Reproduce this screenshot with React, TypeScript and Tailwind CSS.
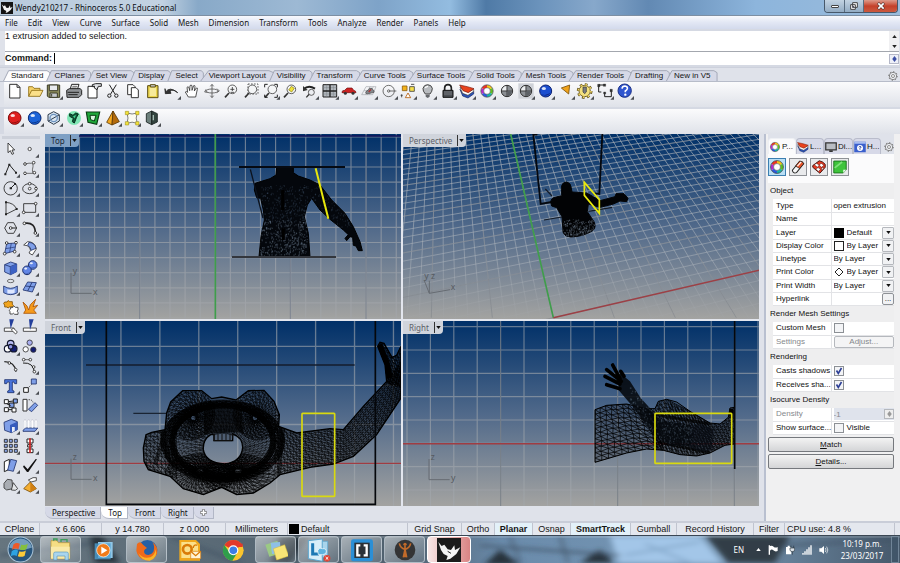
import React, { ReactNode } from "react";

type P = [number, number];

/* ---------- wireframe helpers ---------- */

function sample(pts: P[], n: number): P[] {
  const acc = [0];
  for (let i = 1; i < pts.length; i++) {
    acc.push(acc[i - 1] + Math.hypot(pts[i][0] - pts[i - 1][0], pts[i][1] - pts[i - 1][1]));
  }
  const total = acc[acc.length - 1];
  const out: P[] = [];
  let k = 1;
  for (let i = 0; i <= n; i++) {
    const d = (total * i) / n;
    while (k < pts.length - 1 && acc[k] < d) k++;
    const t = (d - acc[k - 1]) / (acc[k] - acc[k - 1] || 1);
    out.push([pts[k - 1][0] + (pts[k][0] - pts[k - 1][0]) * t, pts[k - 1][1] + (pts[k][1] - pts[k - 1][1]) * t]);
  }
  return out;
}

function patch(a: P[], b: P[], nu: number, nv: number): string {
  const A = sample(a, nu);
  const B = sample(b, nu);
  const at = (i: number, j: number) => {
    const t = j / nv;
    const wob = j > 0 && j < nv ? Math.sin(i * 2.3 + j * 1.7) * 1.6 : 0;
    return `${(A[i][0] + (B[i][0] - A[i][0]) * t + wob).toFixed(1)} ${(A[i][1] + (B[i][1] - A[i][1]) * t - wob).toFixed(1)}`;
  };
  let d = "";
  for (let j = 0; j <= nv; j++) {
    d += "M" + at(0, j);
    for (let i = 1; i <= nu; i++) d += "L" + at(i, j);
  }
  for (let i = 0; i <= nu; i++) {
    d += "M" + at(i, 0);
    for (let j = 1; j <= nv; j++) d += "L" + at(i, j);
  }
  for (let i = 0; i < nu; i++) for (let j = 0; j < nv; j++) d += `M${at(i, j)}L${at(i + 1, j + 1)}`;
  return d;
}

function ell(cx: number, cy: number, rx: number, ry: number): P[] {
  const out: P[] = [];
  for (let i = 0; i <= 60; i++) {
    const a = (i / 60) * Math.PI * 2;
    out.push([cx + rx * Math.cos(a), cy + ry * Math.sin(a)]);
  }
  return out;
}

function specks(x: number, y: number, w: number, h: number, n: number): string {
  let s = 7;
  const r = () => (s = (s * 16807) % 2147483647) / 2147483647;
  let d = "";
  for (let i = 0; i < n; i++) d += `M${(x + r() * w).toFixed(0)} ${(y + r() * h).toFixed(0)}v${(2 + r() * 4).toFixed(0)}`;
  return d;
}

function gridPath(x0: number, dx: number, nx: number, y0: number, dy: number, ny: number, l: number, r: number): string {
  let d = "";
  for (let i = 0; i < nx; i++) d += `M${x0 + dx * i} 0V580`;
  for (let i = 0; i < ny; i++) d += `M${l} ${y0 + dy * i}H${r}`;
  return d;
}

function Scene({ id, box, children }: { id: string; box: string; children: ReactNode }) {
  const [x, y] = box.split(" ");
  return (
    <svg viewBox={box} preserveAspectRatio="xMidYMid slice" className="absolute inset-0 h-full w-full">
      <defs>
        <linearGradient id={id} x1="0" y1="0" x2="0" y2="1">
          <stop offset="0" stopColor="#003068" />
          <stop offset="0.5" stopColor="#50698a" />
          <stop offset="1" stopColor="#a3a3a1" />
        </linearGradient>
      </defs>
      <rect x={x} y={y} width="1068" height="556" fill={`url(#${id})`} />
      {children}
    </svg>
  );
}

function Axis({ x, y, h, v }: { x: number; y: number; h: string; v: string }) {
  return (
    <g fontFamily="Noto Sans, sans-serif" fontSize="26" fill="#565a60">
      <path d={`M${x} ${y - 62}V${y}H${x + 62}`} fill="none" stroke="#666b72" strokeWidth="3" />
      <text x={x + 66} y={y + 5}>{h}</text>
      <text x={x + 5} y={y - 58}>{v}</text>
    </g>
  );
}

const TORSO =
  "M170 112H220V128L235 138L270 150L300 165L335 210L375 250L400 290L420 335L427 362L415 362L408 348L400 346L398 322L390 320L380 332L375 325L385 314L370 300L330 268L300 240L275 205L262 225L253 260L265 310L270 380H117L123 320L133 270L130 240L122 205L110 203L103 180L105 160L150 146L168 135Z";

function TopScene() {
  return (
    <Scene id="gTop" box="-525 12 1068 555">
      <path d={gridPath(-512, 45.25, 24, 20.5, 45.3, 13, -530, 545)} stroke="#a4a8ad" strokeOpacity=".62" strokeWidth="3.5" fill="none" />
      <path d="M-525 18H545" stroke="#11125a" strokeWidth="4" />
      <path d="M-241 12V567M211 12V567M438 12V567" stroke="#667080" strokeOpacity=".6" strokeWidth="3" />
      <path d="M-14 12V567" stroke="#3f9d4b" strokeWidth="5" />
      <clipPath id="torso"><path d={TORSO} /></clipPath>
      <path d={TORSO} fill="#04070c" stroke="#000" strokeWidth="3" />
      <g clipPath="url(#torso)" fill="none">
        <path d={specks(125, 165, 140, 110, 300)} stroke="#4a617a" strokeOpacity=".5" strokeWidth="1.6" />
        <path d={specks(122, 270, 141, 105, 420)} stroke="#7d90a5" strokeOpacity=".55" strokeWidth="1.8" />
        <path d={specks(270, 165, 130, 130, 220)} stroke="#4a617a" strokeOpacity=".45" strokeWidth="1.6" />
        <path d="M190 295v35M188 180v60" stroke="#000" strokeWidth="9" />
      </g>
      <path d="M57 111H375" stroke="#060a12" strokeWidth="6" />
      <path d="M36 381H348" stroke="#33363c" strokeWidth="6" />
      <path d="M91 118L129 264" stroke="#0c131e" strokeWidth="4" />
      <path d="M287 115L325 266" stroke="#e8e80c" strokeWidth="6" />
      <Axis x={-447} y={490} h="x" v="y" />
    </Scene>
  );
}

function perspectiveGrid(): { minor: string; major: string } {
  let minor = "";
  let major = "";
  for (let j = -16; j <= 44; j++) {
    const x = 460 + 36.6 * j;
    const y2 = -20;
    const t = (563 - y2) / 1450;
    const seg = `M${x.toFixed(1)} 563L${(x + (124 - x) * t).toFixed(1)} ${y2}`;
    const seg2 = `M${(x - (124 - x) * 0.01).toFixed(1)} 578L${x.toFixed(1)} 563`;
    minor += seg + seg2;
    if (j % 5 === 0) major += seg;
  }
  for (let k = -4; k <= 46; k++) {
    const t = k / (k + 44.3);
    const gx = 460 + (124 - 460) * t;
    const gy = 563 - 1450 * t;
    const m = (-887 - gy) / (6710 - gx);
    const seg = `M-10 ${(gy + m * (-10 - gx)).toFixed(1)}L1090 ${(gy + m * (1090 - gx)).toFixed(1)}`;
    minor += seg;
    if (k % 5 === 0) major += seg;
  }
  return { minor, major };
}

const BODY =
  "M485 192V168Q487 157 499 156Q512 158 513 170L516 186L548 188L562 190L600 212L645 200L648 191L672 191L684 205L680 215L660 213L640 222L600 232L565 222L562 245L582 275Q590 292 578 302Q550 320 512 321Q490 318 489 305L486 260L470 233L455 228Q448 210 460 203L485 197Z";

function PerspectiveScene() {
  const g = perspectiveGrid();
  return (
    <Scene id="gPer" box="9 12 1068 555">
      <linearGradient id="fade" x1="0" y1="0" x2="0" y2="567" gradientUnits="userSpaceOnUse">
        <stop offset="0" stopColor="#a9b0b8" stopOpacity=".75" />
        <stop offset=".7" stopColor="#a9b0b8" stopOpacity=".6" />
        <stop offset="1" stopColor="#a3a6aa" stopOpacity=".2" />
      </linearGradient>
      <path d={g.minor} stroke="url(#fade)" strokeWidth="2.8" fill="none" />
      <path d={g.major} stroke="#70767e" strokeOpacity=".5" strokeWidth="2.4" fill="none" />
      <path d="M332 12L460 563" stroke="#3f9d4b" strokeWidth="5" />
      <path d="M460 563L1080 420" stroke="#9c4046" strokeWidth="4.5" />
      <path d="M412 14H400L422 222L455 216M607 12L598 192L585 190" stroke="#05080e" strokeWidth="5.5" fill="none" />
      <path d="M436 177L456 198M432 270L486 261M565 244L637 232" stroke="#141b26" strokeWidth="3.5" fill="none" />
      <clipPath id="pbody"><path d={BODY} /></clipPath>
      <path d={BODY} fill="#020305" stroke="#020305" strokeWidth="3" />
      <path clipPath="url(#pbody)" d={specks(490, 268, 95, 50, 220)} stroke="#8091a4" strokeOpacity=".6" strokeWidth="1.8" />
      <path d="M553 157V196L598 250V209Z" stroke="#e8e80c" strokeWidth="5" fill="none" />
      <g fontFamily="Noto Sans, sans-serif" fontSize="26" fill="#565a60">
        <path d="M72 450L88 490L150 479M88 490V452" fill="none" stroke="#666b72" strokeWidth="3" />
        <text x="152" y="481">x</text>
        <text x="73" y="448">y</text>
        <text x="93" y="448">z</text>
      </g>
    </Scene>
  );
}

const FRONT =
  "M-230 390L-222 350L-205 343L-165 335L-160 285L-148 252L-112 218H-55L-25 242L5 237L48 246L85 218L132 217L162 250L178 290L176 325L230 345L330 332L370 335L430 265L500 190L495 140L473 85L480 73L492 76L516 118L530 112L543 85V240L470 350L400 415L340 438L270 448L180 470L150 495L100 525L50 530L5 508L-50 530L-110 512L-150 475L-215 455L-228 430Z";
const HOLE = "M-50 395Q-52 365 -28 350H-18V368H38V348Q68 358 68 388Q64 432 14 438Q-44 434 -50 395Z";

function FrontScene() {
  return (
    <Scene id="gFro" box="-525 9 1068 555">
      <path d={gridPath(-414, 116.8, 9, 85, 117.2, 4, -530, 545)} stroke="#a4a8ad" strokeOpacity=".6" strokeWidth="4" fill="none" />
      <path d="M-525 436H545" stroke="#a03c42" strokeWidth="4" />
      <path d="M-402 141H404" stroke="#141d2c" strokeWidth="5" />
      <path d="M-260 286H-160" stroke="#1a2433" strokeWidth="4" />
      <clipPath id="front"><path d={FRONT + HOLE} clipRule="evenodd" /></clipPath>
      <path d={FRONT + HOLE} fill="#0a1018" fillOpacity=".25" fillRule="evenodd" stroke="#000" strokeWidth="4" />
      <g clipPath="url(#front)" fill="none" stroke="#000">
        <g strokeWidth="1.8">
          <path d={patch([[165, 322], [230, 345], [330, 332], [370, 335], [430, 265], [500, 190], [545, 130]], [[165, 475], [270, 448], [340, 438], [400, 415], [470, 350], [515, 290], [548, 230]], 50, 16)} />
          <path d={patch([[473, 80], [495, 140], [500, 195]], [[560, 60], [552, 130], [550, 210]], 16, 12)} />
          <path d={patch(ell(-90, 290, 74, 76), ell(-80, 300, 8, 8), 42, 8)} />
          <path d={patch(ell(113, 290, 72, 76), ell(105, 300, 8, 8), 42, 8)} />
          <path d={patch(ell(-60, 470, 105, 62), ell(-60, 460, 12, 8), 50, 6)} />
          <path d={patch(ell(55, 470, 108, 62), ell(55, 460, 12, 8), 50, 6)} />
          <path d={patch([[-232, 340], [-232, 460]], [[-130, 325], [-130, 480]], 13, 9)} />
        </g>
        <path d={patch(ell(8, 370, 186, 122), ell(8, 368, 143, 98), 100, 7)} strokeWidth="2" />
        <path d={patch(ell(8, 368, 144, 98), ell(8, 392, 58, 46), 78, 7)} strokeWidth="1.3" />
        <ellipse cx="8" cy="370" rx="152" ry="108" strokeWidth="16" strokeOpacity=".85" />
        <ellipse cx="8" cy="372" rx="174" ry="118" strokeWidth="20" strokeOpacity=".45" />
        <path d="M-48 278Q10 262 66 278L70 345Q50 340 8 345Q-30 345 -48 350Z" fill="#000" fillOpacity=".7" stroke="none" />
        <path d="M-165 340L-195 440M-180 330L-150 440M190 330L175 470" strokeWidth="12" strokeOpacity=".5" />
        <path d="M478 80L500 135L510 180" strokeWidth="18" />
      </g>
      <path d="M-18 348V368M-6 348V368M6 348V368M18 348V368M30 348V368M38 348V362M-20 368H36" stroke="#111" strokeWidth="3" fill="none" />
      <path d="M-341 9V559H466V9" stroke="#05070b" strokeWidth="5" fill="none" />
      <rect x="246" y="286" width="98" height="249" rx="2" fill="none" stroke="#d9d90f" strokeWidth="5" />
      <Axis x={-447} y={484} h="x" v="z" />
    </Scene>
  );
}

const SIDE =
  "M585 275L620 262L680 258L740 272L765 272L775 250L800 244L830 252L870 280L930 315L960 318L985 298L990 270L1003 268V378L975 382L930 405L890 414L840 410L790 397L740 393L680 405L585 433Z";
const ARM = "M660 165L690 190L722 240L768 290L800 310L870 320L882 345L870 385L810 382L755 345L700 268L655 215Z";

function RightScene() {
  return (
    <Scene id="gRig" box="9 9 1068 555">
      <path d={gridPath(21, 70.2, 16, 26, 70, 8, 0, 1090)} stroke="#a4a8ad" strokeOpacity=".6" strokeWidth="3.5" fill="none" />
      <path d="M302 12V567M653 12V567M1003 12V567" stroke="#59616c" strokeOpacity=".5" strokeWidth="3" />
      <path d="M0 377H1090" stroke="#a03c42" strokeWidth="4.5" />
      <clipPath id="side"><path d={SIDE} /></clipPath>
      <path d={SIDE} fill="#0a1018" fillOpacity=".25" stroke="#000" strokeWidth="3" />
      <g clipPath="url(#side)" fill="none" stroke="#000">
        <path strokeWidth="2.2" d={patch([[585, 275], [620, 262], [680, 258], [750, 272]], [[585, 433], [680, 405], [740, 393], [790, 397]], 10, 11)} />
        <path strokeWidth="1.7" d={patch([[740, 272], [775, 250], [800, 244], [870, 280], [930, 315], [1003, 270]], [[770, 394], [840, 410], [890, 414], [930, 405], [975, 382], [1003, 378]], 42, 14)} />
        <path d="M765 290L930 318M775 372L930 405" strokeWidth="9" strokeOpacity=".7" />
      </g>
      <path d={ARM} fill="#05080c" fillOpacity=".88" />
      <path d="M660 182L638 141M664 190L620 155M660 198L615 175M660 212L620 200M672 175L662 160" stroke="#000" strokeWidth="11" strokeLinecap="round" />
      <path d={patch([[870, 322], [905, 320], [940, 335]], [[870, 388], [905, 400], [935, 395]], 12, 12)} fill="none" stroke="#0a0e14" strokeWidth="1.6" />
      <clipPath id="arm"><path d={ARM} /></clipPath>
      <path clipPath="url(#arm)" d={specks(690, 200, 190, 190, 520)} stroke="#65788e" strokeOpacity=".6" strokeWidth="1.6" />
      <path d="M1004 9V453" stroke="#05070b" strokeWidth="5" />
      <path d="M994 272V300" stroke="#000" strokeWidth="12" />
      <rect x="765" y="286" width="230" height="150" rx="2" fill="none" stroke="#d9d90f" strokeWidth="5" />
      <Axis x={87} y={485} h="y" v="z" />
    </Scene>
  );
}

function Viewport({ name, active, children }: { name: string; active?: boolean; children: ReactNode }) {
  return (
    <section className="relative min-h-0 min-w-0 overflow-hidden">
      {children}
      <button
        className={`absolute left-0 top-0 flex h-[13px] items-center rounded-br-sm pl-1.5 pr-0.5 text-[8px] leading-none ${
          active ? "bg-[#7fa0c4] text-[#1b2733]" : "bg-[#d0d4dc] text-[#5c6067]"
        }`}
      >
        {name}
        <span className="ml-[5px] h-[11px] border-l border-[#333]" />
        <svg viewBox="0 0 6 4" className="ml-px h-[3px] w-[5px]"><path d="M0 0h6L3 4z" fill="#111" /></svg>
      </button>
    </section>
  );
}

/* ---------- icons, each drawn on a 54 unit square ---------- */

const K = { stroke: "#222", strokeWidth: 3, fill: "none" };
const G = { stroke: "#555", strokeWidth: 2.5, fill: "none" };

function Ic({ children, tri }: { children: ReactNode; tri?: boolean }) {
  return (
    <svg viewBox="0 0 54 54" className="h-[18px] w-[18px] shrink-0">
      {children}
      {tri && <path d="M54 42v11H43z" fill="#4a4d52" />}
    </svg>
  );
}

function Tool({ label, tri, children }: { label: string; tri?: boolean; children: ReactNode }) {
  return (
    <button aria-label={label} className="flex h-[18px] w-[18px] items-center justify-center">
      <Ic tri={tri}>{children}</Ic>
    </button>
  );
}

const sphere = (cx: number, cy: number, r: number, fill: string, dark: string) => (
  <>
    <circle cx={cx} cy={cy} r={r} fill={fill} stroke={dark} strokeWidth="3" />
    <path d={`M${cx - r * 0.7} ${cy + r * 0.5}A${r} ${r} 0 0 0 ${cx + r * 0.8} ${cy + r * 0.3}Q${cx} ${cy + r * 0.9} ${cx - r * 0.7} ${cy + r * 0.5}`} fill={dark} />
    <ellipse cx={cx - r * 0.3} cy={cy - r * 0.4} rx={r * 0.35} ry={r * 0.25} fill="#fff" fillOpacity=".85" />
  </>
);

const wheel = (
  <g fill="none" strokeWidth="8">
    <path d="M27 13A14 14 0 0 1 39 20" stroke="#f5c518" />
    <path d="M39 20A14 14 0 0 1 39 34" stroke="#5dc21e" />
    <path d="M39 34A14 14 0 0 1 27 41" stroke="#19b5a5" />
    <path d="M27 41A14 14 0 0 1 15 34" stroke="#2a5be0" />
    <path d="M15 34A14 14 0 0 1 15 20" stroke="#b52ad0" />
    <path d="M15 20A14 14 0 0 1 27 13" stroke="#ee3322" />
    <circle cx="27" cy="27" r="18.5" stroke="#333" strokeWidth="2" />
    <circle cx="27" cy="27" r="10" stroke="#333" strokeWidth="1.5" fill="#fff" />
  </g>
);

const layers = (
  <g strokeWidth="2">
    <path d="M6 22L14 42L30 48L47 36V28L30 38L14 34Z" fill="#2b52b8" stroke="#13265e" />
    <path d="M6 16L14 34L30 40L47 28V22L30 30Z" fill="#fff" stroke="#444" />
    <path d="M5 9L15 26L31 32L48 20L28 14Z" fill="#e8421d" stroke="#7a1607" />
  </g>
);

const globe = (
  <g>
    <circle cx="27" cy="27" r="17" fill="#8b8f94" stroke="#333" strokeWidth="3" />
    <path d="M13 21Q17 12 26 12V26H12Z" fill="#eceef0" />
    <path d="M10 27H44M27 10V44" stroke="#333" strokeWidth="2.5" fill="none" />
    <path d="M28 28H42Q40 40 28 43Z" fill="#5d6166" />
  </g>
);

const lens = (extra?: ReactNode) => (
  <g>
    <path d="M21 33L9 46" stroke="#333" strokeWidth="5" />
    <circle cx="31" cy="22" r="13" fill="#f5f6f8" fillOpacity=".8" stroke="#444" strokeWidth="2.5" />
    {extra}
  </g>
);

const std: [string, boolean, ReactNode][] = [
  ["New", false, <path d="M11 7H33L42 16V48H11ZM33 7V16H42" stroke="#333" strokeWidth="3" fill="#fff" />],
  ["Open", false, <g stroke="#8a6a10" strokeWidth="2.5"><path d="M8 43V14H20L24 19H42V25" fill="#f6d36b" /><path d="M8 43L17 25H51L42 43Z" fill="#fbe08a" /></g>],
  ["Save", true, <g stroke="#3c3c28" strokeWidth="3"><path d="M7 9H44V46H11L7 42Z" fill="#8d8d5c" /><path d="M13 9H38V26H13Z" fill="#e9ebee" /><path d="M15 33H37V46H15Z" fill="#c5c8cc" /><path d="M20 36V44" /></g>],
  ["Print", false, <g stroke="#222" strokeWidth="3"><path d="M15 23L20 7H42L37 23" fill="#fff" /><path d="M5 25L13 20H46L50 25V38L42 46H6Z" fill="#8f9296" /><path d="M8 31H42M10 38H38" stroke="#222" /><path d="M22 13H37M20 18H35" strokeWidth="2" /></g>],
  ["Properties", false, <g><path d="M9 13H36V48H9Z" {...K} fill="#fff" /><path d="M22 8L32 5H49V13H40L36 23L28 18V12L22 14Z" fill="#e2e4e8" stroke="#222" strokeWidth="3" /></g>],
  ["Cut", false, <g><path d="M16 8L33 36M37 8L20 36" {...K} /><circle cx="16" cy="41" r="5" {...K} /><circle cx="37" cy="41" r="5" {...K} /></g>],
  ["Copy", false, <g stroke="#333" strokeWidth="3" fill="#fff"><path d="M11 8H27L33 14V38H11Z" /><path d="M22 17H36L43 24V47H22Z" /></g>],
  ["Paste", false, <g stroke="#5b4b10" strokeWidth="3"><path d="M11 11H42V47H11Z" fill="#ead44b" /><path d="M17 16H36V42H17Z" fill="#f7ea9a" stroke="none" /><path d="M19 8H34V15H19Z" fill="#c8cbd0" /></g>],
  ["Undo", true, <path d="M8 30Q20 12 44 32Q30 20 21 27L24 34L7 35L6 20Z" fill="#333" stroke="#222" strokeWidth="2.5" />],
  ["Pan", false, <path d="M16 45L7 30Q9 26 14 31L12 16Q15 12 18 17L20 26L21 11Q24 7 27 11V25L32 11Q36 9 36 14L34 27L40 18Q45 17 43 22L38 45Z" fill="#fff" stroke="#333" strokeWidth="2.5" />],
  ["Rotate", false, <g {...G}><path d="M27 8V46M22 13L27 7L32 13M22 41L27 47L32 41" /><ellipse cx="27" cy="27" rx="18" ry="6" /><path d="M9 22L5 30L14 31M42 20L49 27L41 32" /></g>],
  ["Zoom dynamic", false, lens(<path d="M25 22H37M31 15V27M26 31H36" stroke="#333" strokeWidth="2.5" />)],
  ["Zoom window", false, <g><path d="M18 6H48V36H18Z" stroke="#444" strokeWidth="2.5" strokeDasharray="5 4" fill="none" />{lens()}</g>],
  ["Zoom extents", true, <g>{lens()}<path d="M8 16V7H17M37 7H46V16M46 38V46H37M17 46H8V38" {...K} /></g>],
  ["Zoom selected", false, lens(<path d="M23 24L31 13L40 19L32 30Z" fill="#f0e23a" stroke="#8a7d10" strokeWidth="2" />)],
  ["Undo view", true, <g><path d="M8 22Q22 8 42 20" {...K} strokeWidth={6} /><path d="M6 12V28L20 24Z" fill="#333" /><path d="M25 36L16 46" stroke="#333" strokeWidth="4" /><circle cx="31" cy="31" r="9" fill="#eceef2" stroke="#444" strokeWidth="2.5" /></g>],
  ["Four view", true, <g><path d="M6 8H47V45H6Z" fill="#b3b8be" stroke="#222" strokeWidth="3" /><path d="M17 8V45M37 8V45M6 17H47M6 36H47" stroke="#7b8087" strokeWidth="1.5" /><path d="M27 8V45M6 27H47" stroke="#222" strokeWidth="4" /></g>],
  ["Set view", true, <g><path d="M6 30Q6 25 14 25L21 18H36L41 25Q48 26 48 32H6Z" fill="#cc2222" stroke="#6d0c0c" strokeWidth="2" /><circle cx="16" cy="34" r="4.5" fill="#333" /><circle cx="39" cy="34" r="4.5" fill="#333" /></g>],
  ["Set cplane", true, <g><path d="M5 38L18 14H48L38 38ZM12 26H44M16 38L30 14M28 38L40 14" stroke="#a5a8ac" strokeWidth="2" fill="none" /><path d="M17 32Q18 26 24 25L29 19H36L40 25Q43 27 42 31L20 36Z" fill="#84888d" stroke="#444" strokeWidth="2" /><path d="M26 30L33 22" stroke="#a33" strokeWidth="4" /></g>],
  ["Object snap", true, <g><circle cx="26" cy="27" r="17" {...G} /><path d="M26 27H49" {...G} /><circle cx="26" cy="27" r="3.5" {...K} fill="#fff" strokeWidth={2} /></g>],
  ["Select", true, <g strokeWidth="2.5"><path d="M10 12H24V26H10Z" fill="#f2b21b" stroke="#93600c" /><path d="M32 14H46V28H32Z" fill="#f7e04b" stroke="#444" /><path d="M27 33L35 47H19Z" fill="#fff" stroke="#b55d0a" /><path d="M5 40H11M8 37V46M36 7H46" stroke="#333" /></g>],
  ["Hide", true, <g><path d="M19 36Q11 27 12 19Q15 8 26 8Q38 9 40 19Q40 28 33 36Z" fill="#b9bcc0" stroke="#444" strokeWidth="3" /><path d="M20 38H32V44L26 48L20 44Z" fill="#66696d" /><path d="M19 18Q21 13 27 14" stroke="#fff" strokeWidth="4" fill="none" /></g>],
  ["Lock", true, <g><path d="M17 26V17Q18 8 27 8Q36 8 37 17V26" stroke="#222" strokeWidth="5" fill="none" /><path d="M12 25H42V46H12Z" fill="#4a4d52" stroke="#111" strokeWidth="3" /><path d="M15 30H39M15 36H39" stroke="#8d9095" strokeWidth="2" /></g>],
  ["Layer", true, layers],
  ["Object properties", true, wheel],
  ["Shade", false, globe],
  ["Shade selected", true, <g><path d="M4 4H50V50H4Z" fill="#cfd2d8" />{globe}</g>],
  ["Render", true, sphere(26, 27, 18, "#1c4fd0", "#0a1f70")],
  ["Lights", true, <path d="M13 18L38 9L35 36Z" fill="#f0a31c" stroke="#7b500b" strokeWidth="2.5" />],
  ["Options", true, <g><circle cx="26" cy="27" r="20" fill="none" stroke="#5d4a10" strokeWidth="7" strokeDasharray="8 7.7" /><circle cx="26" cy="27" r="17" fill="#f3e07e" stroke="#5d4a10" strokeWidth="2.5" /><circle cx="26" cy="27" r="19" fill="none" stroke="#ecd467" strokeWidth="5" strokeDasharray="5 9.9" /><path d="M21 15H31V30L26 35L21 30Z" fill="#7a7d82" stroke="#333" strokeWidth="2" /></g>],
  ["Dimension", true, <g {...K}><path d="M8 9V30M8 9H26M8 30H16M26 33V44H46V26" /><path d="M5 7H12V14H5ZM22 6H29V13H22ZM23 30H29V36H23ZM42 22H49V29H42Z" fill="#333" strokeWidth="1" /></g>],
  ["Help", true, <g><circle cx="26" cy="26" r="20" fill="#2f55cf" stroke="#1a2f86" strokeWidth="3" /><path d="M18 20Q19 12 27 12Q35 13 34 20Q33 24 28 27V31" stroke="#fff" strokeWidth="5" fill="none" /><circle cx="28" cy="38" r="3.5" fill="#fff" /></g>],
];

const extra: [string, ReactNode][] = [
  ["Red sphere", sphere(26, 27, 19, "#df1f1f", "#7c0a0a")],
  ["Blue sphere", sphere(26, 27, 19, "#1b63d8", "#0a2a74")],
  ["Slice", <g><path d="M26 8L43 17V36L26 46L9 36V17Z" fill="#dbe7f3" stroke="#2c3b4c" strokeWidth="3" /><path d="M10 36L42 18" stroke="#2c3b4c" strokeWidth="3" /><circle cx="26" cy="27" r="11" fill="none" stroke="#6d93bf" strokeWidth="4" /></g>],
  ["Morph", <g><circle cx="27" cy="27" r="21" fill="#35e08a" fillOpacity=".6" /><path d="M14 14L24 19L32 12L40 15L34 26L28 42L22 38L25 28L14 22Z" fill="#0f5b3a" stroke="#062c1b" strokeWidth="3" /><path d="M24 22L33 18L29 28Z" fill="#46d48f" /></g>],
  ["Cage", <g><path d="M7 9H47L38 46L12 40Z" fill="#1fa83a" stroke="#0a3d14" strokeWidth="3.5" /><path d="M18 19H36L31 36L20 32Z" fill="#d9f5de" stroke="#0a3d14" strokeWidth="3" /></g>],
  ["Pyramid", <g stroke="#5c3906" strokeWidth="2.5"><path d="M27 6L8 40L24 48Z" fill="#f4a81e" /><path d="M27 6L24 48L46 38Z" fill="#b36a0c" /></g>],
  ["Edit points", <g><path d="M12 12Q27 18 43 12Q36 27 43 43Q27 36 12 43Q18 27 12 12Z" fill="#fbfbf2" stroke="#666" strokeWidth="2.5" /><path d="M7 7H17V17H7ZM38 7H48V17H38ZM38 38H48V48H38ZM7 38H17V48H7Z" fill="#f3e23c" stroke="#8d8210" strokeWidth="1.5" /></g>],
  ["Box", <g stroke="#18211f" strokeWidth="2.5"><path d="M10 14L26 6V47L10 39Z" fill="#6c7f7b" /><path d="M26 6L43 14V39L26 47Z" fill="#33443f" /><path d="M31 18V34" stroke="#a4bbb3" strokeWidth="4" /></g>],
];

const dot = (x: number, y: number) => <circle cx={x} cy={y} r="4" fill="#fff" stroke="#222" strokeWidth="2.5" />;
const bl = { fill: "#7f9fe8", stroke: "#20336e", strokeWidth: 2.5 };

const side: [string, boolean, ReactNode][] = [
  ["Pointer", false, <path d="M18 9V38L25 32L30 43L35 41L30 30H38Z" {...K} fill="#fff" strokeWidth={2.5} />],
  ["Point", true, <circle cx="26" cy="27" r="5" fill="#fff" stroke="#333" strokeWidth="2.5" />],
  ["Polyline", true, <g><path d="M10 43L22 14L42 38" {...K} /><path d="M7 40H13V46H7ZM19 11H25V17H19ZM39 35H45V41H39Z" fill="#222" /></g>],
  ["Curve", true, <g><path d="M12 12Q40 4 36 20Q30 42 44 40H10" {...G} />{dot(12, 12)}{dot(38, 8)}{dot(12, 40)}{dot(40, 38)}</g>],
  ["Circle", true, <g><circle cx="26" cy="28" r="20" {...K} strokeWidth={2.5} /><path d="M26 28L39 15" {...K} /><path d="M23 25H30V31H23ZM36 12H42V18H36Z" fill="#222" /></g>],
  ["Ellipse", true, <g><ellipse cx="26" cy="29" rx="21" ry="15" {...K} strokeWidth={2.5} />{dot(26, 14)}{dot(26, 29)}{dot(45, 29)}</g>],
  ["Arc", true, <g><path d="M12 46V10Q36 12 44 30Z" {...K} strokeWidth={2.5} /><path d="M9 7H15V13H9ZM9 43H15V49H9ZM41 27H47V33H41Z" fill="#222" /></g>],
  ["Rectangle", true, <g><path d="M8 14H44V40H8Z" {...K} strokeWidth={2.5} />{dot(8, 40)}{dot(44, 14)}</g>],
  ["Polygon", true, <g><path d="M8 27L17 11H35L44 27L35 43H17Z" {...K} strokeWidth={2.5} /><path d="M26 27H44" {...K} />{dot(26, 27)}</g>],
  ["Fillet", true, <g><path d="M10 13Q44 8 43 44" stroke="#222" strokeWidth="5" fill="none" />{dot(10, 13)}{dot(43, 42)}</g>],
  ["Surface", true, <g><path d="M14 14L42 12L38 36L8 44Z" {...bl} /><path d="M28 12L23 40M11 29L40 24" stroke="#20336e" strokeWidth="2" />{dot(14, 12)}{dot(42, 11)}{dot(8, 44)}{dot(38, 38)}</g>],
  ["Sweep", true, <g><path d="M8 18L20 8Q42 8 46 30L34 48L24 42Q32 34 26 26Q20 18 8 18Z" fill="#fff" stroke="#333" strokeWidth="2.5" /><path d="M24 10Q42 12 45 28L30 34Q30 24 20 19Z" {...bl} /></g>],
  ["Box", true, <g><path d="M8 17L26 9L44 15V38L26 47L8 39Z" {...bl} /><path d="M8 17L25 23L44 15M25 23V46" stroke="#20336e" strokeWidth="2.5" fill="none" /><path d="M25 23L44 15V38L26 47Z" fill="#3d62c4" /></g>],
  ["Spheres", true, <g>{sphere(35, 18, 13, "#6286e6", "#20336e")}{sphere(18, 34, 13, "#6286e6", "#20336e")}</g>],
  ["Cylinder", true, <g><ellipse cx="26" cy="9" rx="10" ry="5" {...G} /><path d="M5 24Q26 38 46 24V44Q26 56 5 44Z" {...bl} /><path d="M16 34Q27 38 38 32V44Q27 48 16 46Z" fill="#dfe8ff" /></g>],
  ["Mesh", true, <g><path d="M6 36L20 12L46 14L34 42Z" {...bl} /><path d="M33 13L20 39M13 24L41 27" stroke="#20336e" strokeWidth="2.5" /></g>],
  ["Join", false, <g strokeWidth="2.5"><path d="M8 12H15Q18 4 23 11H31V19Q38 22 31 27H22Q18 33 15 27H8V21Q2 17 8 12Z" fill="#f2a51e" stroke="#7b500b" /><path d="M26 28H33Q36 21 40 28H48V36Q42 39 48 43V49H38Q34 43 31 48H24V41Q18 37 26 33Z" fill="#fff" stroke="#333" /></g>],
  ["Explode", false, <path d="M6 12L18 24L23 36L28 20L44 4L36 26L50 22L38 36L46 46H8L14 36Z" fill="#f59a1b" stroke="#a9540a" strokeWidth="2.5" />],
  ["Trim", false, <g><path d="M7 30H36V40H7Z" fill="#fff" stroke="#333" strokeWidth="2.5" /><path d="M22 4H36L26 32Z" fill="#233f9c" /><path d="M34 30L46 42L41 48L28 36Z" fill="#fff" stroke="#333" strokeWidth="2.5" /></g>],
  ["Split", false, <g><path d="M7 30H46V40H7Z" fill="#fff" stroke="#333" strokeWidth="2.5" /><path d="M24 4H38L27 36Z" fill="#233f9c" /></g>],
  ["Group", true, <g strokeWidth="3.5" stroke="#14192e"><circle cx="26" cy="17" r="10" fill="#b8bcf3" /><circle cx="17" cy="32" r="10" fill="#fff" /><circle cx="35" cy="32" r="10" fill="#141d72" /><circle cx="26" cy="26" r="7" fill="#8f96e6" /></g>],
  ["Ungroup", false, <g strokeWidth="2.5" stroke="#333"><circle cx="26" cy="14" r="8" fill="#a9aef0" /><circle cx="14" cy="34" r="8" fill="#fff" /><circle cx="37" cy="35" r="8" fill="#141d72" /></g>],
  ["Curve edit", false, <g><path d="M7 14Q38 14 42 44" {...K} strokeWidth={4} />{dot(22, 18)}{dot(41, 38)}</g>],
  ["Points on", true, <g><path d="M6 18Q38 16 40 46" {...K} /><path d="M6 8H30" {...G} />{dot(8, 8)}{dot(28, 8)}{dot(38, 30)}{dot(40, 44)}</g>],
  ["Text", true, <path d="M8 8H44V20H38L36 15H31V40L36 42V47H17V42L22 40V15H16L14 20H8Z" {...bl} fill="#4a74da" />],
  ["Move", true, <g><path d="M12 42L40 14" {...G} strokeDasharray="5 3" /><path d="M31 6H46V21H31Z" {...bl} /><path d="M8 32H22V46H8Z" {...K} fill="#fff" /></g>],
  ["Copy", false, <g stroke="#222" strokeWidth="3"><path d="M7 8H19V20H7ZM7 32H19V44H7ZM30 33H42V45H30Z" fill="#fff" /><path d="M34 6H46V18H34ZM22 18H36V31H22Z" fill="#7f9fe8" /><path d="M19 14L34 12M19 38H30M14 20L26 26" fill="none" /></g>],
  ["Rotate", false, <g stroke="#333" strokeWidth="3"><path d="M6 7H18V42H6Z" fill="#fff" /><path d="M22 37L42 17L50 25L32 44Z" {...bl} /><path d="M23 8Q34 8 36 16" fill="none" strokeDasharray="4 3" /></g>],
  ["Solid", true, <g><path d="M6 16L28 7L46 14V38L28 47L8 40Z" {...bl} /><path d="M24 24L46 14V38L38 42V30H30V46L24 44Z" fill="#365bbd" /><path d="M30 30H38V42L30 46Z" fill="#e8edf8" /></g>],
  ["Extrude", true, <g><path d="M6 40L14 33H50L42 43H6Z" {...bl} /><path d="M12 32V10M23 32V10M34 32V10M45 32V10" stroke="#fff" strokeWidth="3.5" /><path d="M8 14L12 6L16 14M19 14L23 6L27 14M30 14L34 6L38 14M41 14L45 6L49 14" fill="#fff" stroke="#aab" strokeWidth="1" /></g>],
  ["Array", true, <path d="M7 7H16V16H7ZM22 7H31V16H22ZM37 7H46V16H37ZM7 22H16V31H7ZM22 22H31V31H22ZM37 22H46V31H37ZM7 37H16V46H7ZM22 37H31V46H22ZM37 37H46V46H37Z" fill="#8ba6e6" stroke="#222" strokeWidth="2.5" />],
  ["Align", true, <g><path d="M18 6H36V18H18ZM20 23H33V30H20ZM18 36H36V47H18Z" fill="#fff" stroke="#222" strokeWidth="3" /><path d="M27 4V48" stroke="#cc2222" strokeWidth="5" /></g>],
  ["Shear", true, <g><path d="M7 17L22 10V40L7 47Z" {...K} fill="#fff" /><path d="M26 10L44 14L34 46L17 42Z" {...bl} /></g>],
  ["Check", true, <path d="M9 28L20 40L44 9L48 10L22 48H18L6 32Z" fill="#111" />],
  ["Solids", true, <g stroke="#333" strokeWidth="2.5"><path d="M6 22L16 10L30 12L32 38L14 42L6 36Z" fill="#a9adb3" /><path d="M34 20L47 38Q42 46 28 42Z" fill="#e5e7ea" /></g>],
  ["Analyze", true, <g strokeWidth="2.5"><path d="M8 38L28 18L46 38L28 48Z" fill="#f4ae31" stroke="#7b500b" /><path d="M28 18V48L46 38Z" fill="#d07f14" /><path d="M22 12L36 5H46V14L30 18Z" fill="#fff" stroke="#333" /></g>],
];

/* ---------- data ---------- */

const menus = ["File", "Edit", "View", "Curve", "Surface", "Solid", "Mesh", "Dimension", "Transform", "Tools", "Analyze", "Render", "Panels", "Help"];
const tabs = ["Standard", "CPlanes", "Set View", "Display", "Select", "Viewport Layout", "Visibility", "Transform", "Curve Tools", "Surface Tools", "Solid Tools", "Mesh Tools", "Render Tools", "Drafting", "New in V5"];

function Gear() {
  return (
    <svg viewBox="0 0 30 30" className="h-2.5 w-2.5">
      <circle cx="15" cy="15" r="11" fill="#eceef2" stroke="#777" strokeWidth="2.5" />
      <circle cx="15" cy="15" r="13" fill="none" stroke="#777" strokeWidth="3" strokeDasharray="4 6" />
      <circle cx="15" cy="15" r="4.5" fill="#fff" stroke="#777" strokeWidth="2.5" />
    </svg>
  );
}

function Arrow({ up, color }: { up?: boolean; color: string }) {
  return (
    <svg viewBox="0 0 6 4" className="h-[3px] w-[5px]"><path d={up ? "M0 4h6L3 0z" : "M0 0h6L3 4z"} fill={color} /></svg>
  );
}

function Section({ children }: { children: ReactNode }) {
  return (
    <tr className="h-[16px]">
      <th colSpan={3} className="bg-[#eeeeef] p-0 pl-0.5 text-left font-normal">{children}</th>
    </tr>
  );
}

function Row({ label, muted, children }: { label: ReactNode; muted?: boolean; children?: ReactNode }) {
  return (
    <tr className="h-[13px]">
      <td className="w-[5px] bg-[#eeeeef] p-0" />
      <th className={`w-[58px] whitespace-nowrap border-b border-r border-[#e2e3e6] bg-white p-0 pl-[3px] text-left font-normal ${muted ? "text-[#85888c]" : ""}`}>{label}</th>
      <td className="border-b border-[#e2e3e6] bg-white p-0 pl-0.5">{children}</td>
    </tr>
  );
}

function Pick({ id, value, swatch }: { id: string; value: string; swatch?: ReactNode }) {
  return (
    <div className="flex h-3 items-center gap-[3px]">
      {swatch}
      <select id={id} className="min-w-0 flex-1 appearance-none bg-transparent p-0 leading-none"><option>{value}</option></select>
      <span className="flex h-3 w-3 shrink-0 items-center justify-center rounded-[1px] border border-[#b5b8bd] bg-[#f1f2f4]"><Arrow color="#111" /></span>
    </div>
  );
}

function Check({ id, on }: { id: string; on?: boolean }) {
  return (
    <span className="grid h-2.5 w-2.5">
      <input id={id} type="checkbox" defaultChecked={on} className="peer col-start-1 row-start-1 h-2.5 w-2.5 appearance-none border border-[#8c9095] bg-[#f3f4f6]" />
      <svg viewBox="0 0 10 10" className="pointer-events-none col-start-1 row-start-1 hidden h-2.5 w-2.5 peer-checked:block"><path d="M2.5 4.5L4.3 7.5L7.5 2" fill="none" stroke="#2c3f96" strokeWidth="1.6" /></svg>
    </span>
  );
}

function PanelTab({ active, label, children }: { active?: boolean; label: string; children: ReactNode }) {
  return (
    <button className={`flex h-4 w-[29px] items-center gap-px rounded-t-sm border border-b-0 ${active ? "border-[#eef0f4] bg-[#fbfbfc]" : "border-[#b9bccb] bg-[#d7d9e8]"}`}>
      <svg viewBox="3 3 48 48" className="h-3 w-3 shrink-0">{children}</svg>
      {label}
    </button>
  );
}

function Properties() {
  return (
    <aside className="flex w-[136px] shrink-0 flex-col border-l-2 border-[#b9c0d0] bg-[#f0f0f1] pl-0.5 pr-1.5 text-[8px] leading-none text-[#111]">
      <div className="h-1 shrink-0 bg-[#dfe2ea]" />
      <div className="flex h-4 shrink-0 items-end bg-[#dfe2ea]">
        <PanelTab active label="P...">{wheel}</PanelTab>
        <PanelTab label="L...">{layers}</PanelTab>
        <PanelTab label="Di..."><g><path d="M6 10H48V38H6Z" fill="#b9bcc2" stroke="#333" strokeWidth="5" /><path d="M20 40H34V47H20Z" fill="#333" /></g></PanelTab>
        <PanelTab label="H..."><g><path d="M4 6H50V48H4Z" fill="#3a5fcd" /><path d="M4 6H50V14H4Z" fill="#a9bdf0" /><circle cx="27" cy="31" r="12" fill="#fff" /><path d="M22 28Q27 21 32 27L27 32V38" stroke="#2740a0" strokeWidth="3.5" fill="none" /></g></PanelTab>
        <button aria-label="Panel options" className="pb-0.5 pl-[3px]"><Gear /></button>
      </div>
      <div className="flex h-[29px] shrink-0 items-center gap-[3px] bg-[#fbfbfc] pb-[3px]">
        <button aria-label="Object" className="border border-[#3c7fb1] bg-[#b9dff5]"><svg viewBox="4 4 46 46" className="h-4 w-4">{wheel}</svg></button>
        <button aria-label="Material" className="border border-[#8e9196] bg-[#e9eaec]"><svg viewBox="0 0 54 54" className="h-4 w-4"><path d="M8 38L32 8Q42 6 46 16L22 46Q10 50 8 38Z" fill="#f7f7f7" stroke="#222" strokeWidth="3.5" /><path d="M19 24L32 8Q42 6 46 16L33 32Z" fill="#e8542a" stroke="#222" strokeWidth="2.5" /><path d="M25 24L38 10" stroke="#fff" strokeWidth="4" /></svg></button>
        <button aria-label="Texture" className="border border-[#8e9196] bg-[#e9eaec]"><svg viewBox="0 0 54 54" className="h-4 w-4"><path d="M28 6Q40 8 48 18V28L30 48L20 40L6 28V22Z" fill="#e83a22" stroke="#3a0a04" strokeWidth="3" /><path d="M17 14L28 20L22 28L12 20ZM34 14L43 21L36 28L28 21ZM16 34L24 29L32 35L25 42ZM36 29L44 30L36 39Z" fill="#fff" stroke="#3a0a04" strokeWidth="1.5" /></svg></button>
        <button aria-label="Decals" className="border border-[#8e9196] bg-[#e9eaec]"><svg viewBox="0 0 54 54" className="h-4 w-4"><path d="M6 7H48V36L38 47H6Z" fill="#3fc43c" stroke="#17701a" strokeWidth="3" /><path d="M48 36H38V47Z" fill="#eafbe9" /><path d="M9 30L34 10" stroke="#7fe07a" strokeWidth="6" /></svg></button>
      </div>
      <table className="h-[252px] w-full table-fixed border-collapse">
        <colgroup><col className="w-[5px]" /><col className="w-[58px]" /><col /></colgroup>
        <tbody>
          <Section>Object</Section>
          <Row label="Type">open extrusion</Row>
          <Row label={<label htmlFor="name">Name</label>}><input id="name" className="block h-2.5 w-full bg-transparent" /></Row>
          <Row label={<label htmlFor="layer">Layer</label>}><Pick id="layer" value="Default" swatch={<span className="h-2.5 w-2.5 bg-black" />} /></Row>
          <Row label={<label htmlFor="dcol">Display Color</label>}><Pick id="dcol" value="By Layer" swatch={<span className="h-2.5 w-2.5 border border-[#222] bg-white" />} /></Row>
          <Row label={<label htmlFor="ltype">Linetype</label>}><Pick id="ltype" value="By Layer" /></Row>
          <Row label={<label htmlFor="pcol">Print Color</label>}><Pick id="pcol" value="By Layer" swatch={<svg viewBox="0 0 10 10" className="h-2.5 w-2.5"><path d="M5 1L9 5L5 9L1 5Z" fill="#fff" stroke="#222" /></svg>} /></Row>
          <Row label={<label htmlFor="pw">Print Width</label>}><Pick id="pw" value="By Layer" /></Row>
          <Row label="Hyperlink"><div className="flex justify-end"><button aria-label="Edit hyperlink" className="h-3 w-3 rounded-[2px] border border-[#8e9196] bg-[#f1f2f4] leading-none">...</button></div></Row>
          <Section>Render Mesh Settings</Section>
          <Row label={<label htmlFor="cm">Custom Mesh</label>}><Check id="cm" /></Row>
          <Row label="Settings" muted><button disabled className="block h-3 w-full rounded-[2px] border border-[#b5b8bd] bg-[#f4f4f5] leading-none text-[#85888c]">Adjust...</button></Row>
          <Section>Rendering</Section>
          <Row label={<label htmlFor="cs">Casts shadows</label>}><Check id="cs" on /></Row>
          <Row label={<label htmlFor="rs">Receives sha...</label>}><Check id="rs" on /></Row>
          <Section>Isocurve Density</Section>
          <Row label={<label htmlFor="den">Density</label>} muted>
            <div className="flex h-3 items-center bg-[#dfe3ec] text-[#85888c]">
              <input id="den" disabled defaultValue="-1" className="w-4 flex-1 bg-transparent" />
              <span className="flex h-2.5 w-2.5 flex-col items-center justify-between border border-[#b5b8bd] bg-[#eee] py-px"><Arrow up color="#999" /><Arrow color="#999" /></span>
            </div>
          </Row>
          <Row label="Show surface..."><label className="flex items-center gap-[3px]"><Check id="vis" />Visible</label></Row>
        </tbody>
      </table>
      <button className="mt-0.5 h-[15px] shrink-0 rounded-[2px] border border-[#75787d] bg-gradient-to-b from-[#f3f3f3] to-[#d4d5d7]"><u>M</u>atch</button>
      <button className="mt-0.5 h-[15px] shrink-0 rounded-[2px] border border-[#75787d] bg-gradient-to-b from-[#f3f3f3] to-[#d4d5d7]"><u>D</u>etails...</button>
    </aside>
  );
}

function Status({ w, on, children }: { w: string; on?: boolean; children?: ReactNode }) {
  return <button className={`${w} shrink-0 whitespace-nowrap border-r border-[#c0c4cf] ${on ? "bg-[#e3f1f9] font-bold" : ""}`}>{children}</button>;
}

function Task({ label, open, children }: { label: string; open?: boolean; children: ReactNode }) {
  return (
    <button aria-label={label} className={`flex h-[27px] w-[41px] shrink-0 items-center justify-center rounded-sm border ${open ? "border-[#c3cdd6]/70 bg-gradient-to-br from-white/50 to-white/10" : "border-transparent"}`}>
      <svg viewBox="0 0 72 72" className="h-6 w-6">{children}</svg>
    </button>
  );
}

function Taskbar() {
  return (
    <footer className="relative isolate flex h-[28px] shrink-0 items-center gap-[2px] overflow-hidden border-t border-[#3a4653] bg-[#5d7183] pr-px">
      <svg viewBox="0 0 900 28" preserveAspectRatio="none" className="absolute inset-0 -z-10 h-full w-full">
        <defs>
          <filter id="soft"><feGaussianBlur stdDeviation="3" /></filter>
          <linearGradient id="bar"><stop offset="0" stopColor="#66757f" /><stop offset=".45" stopColor="#4f606e" /><stop offset=".56" stopColor="#6a8bab" /><stop offset=".8" stopColor="#7898b5" /><stop offset="1" stopColor="#46586a" /></linearGradient>
        </defs>
        <rect width="900" height="28" fill="url(#bar)" />
        <g filter="url(#soft)">
          <path d="M610 0H700L722 28H618Z" fill="#a3c6e8" />
          <path d="M705 0H790L775 28H728Z" fill="#323c46" />
          <path d="M484 30L500 14L520 30ZM580 28L600 14L614 28ZM280 0H310L290 28H270ZM90 0H102L120 28H95Z" fill="#26303a" />
          <path d="M510 0L520 28M560 0L568 28M480 10L620 20M780 10L900 4M170 0L240 28M0 20L90 8" stroke="#3c4e60" strokeWidth="2" />
          <path d="M645 8L690 28M625 20L700 6" stroke="#7fa3c6" strokeWidth="2" />
        </g>
        <path d="M0 1H900" stroke="#fff" strokeOpacity=".3" />
      </svg>
      <button aria-label="Start" className="w-[38px] pl-0.5">
        <svg viewBox="0 0 80 80" className="mx-auto h-[27px] w-[27px]">
          <circle cx="40" cy="40" r="37" fill="#27557d" stroke="#a9c3d8" strokeWidth="3" />
          <path d="M6 34A35 35 0 0 1 74 34Q40 48 6 34" fill="#8db4d2" fillOpacity=".75" />
          <path d="M19 25Q28 18 38 23L34 39Q25 35 15 41Z" fill="#ee5a28" /><path d="M42 25Q51 29 62 23L57 39Q48 44 38 40Z" fill="#84bf3e" />
          <path d="M14 45Q24 38 33 43L29 59Q20 54 11 60Z" fill="#2ea2e2" /><path d="M37 45Q46 49 56 43L52 59Q42 64 32 60Z" fill="#fbca3a" />
        </svg>
      </button>
      <Task label="Explorer" open><path d="M6 8H24L28 14H62V62H6Z" fill="#f5dd84" stroke="#b9962f" strokeWidth="2" /><path d="M14 8V3H24V8M36 12V5H54V12" stroke="#3c9d5b" strokeWidth="4" fill="none" /><path d="M6 26H62V62H6Z" fill="#f9e9a8" /><path d="M14 66V46Q14 42 20 42H52Q58 42 58 46V66H48V54H24V66Z" fill="#a9d5ee" stroke="#5a99bd" strokeWidth="2" /></Task>
      <Task label="Media player"><path d="M18 12H62V60H18Z" fill="#8fc7e8" /><path d="M8 16H56V64H8Z" fill="#4e9fcf" fillOpacity=".8" /><circle cx="34" cy="37" r="20" fill="#f07a1a" stroke="#fff" strokeWidth="2" /><path d="M28 26L46 37L28 48Z" fill="#fff" /></Task>
      <Task label="Firefox" open><circle cx="37" cy="36" r="30" fill="#2560a5" /><path d="M6 18Q16 6 24 20L36 30Q22 36 30 48Q46 56 56 40Q60 22 52 12Q72 26 66 48Q56 68 34 67Q8 62 4 38Z" fill="#ee6a1b" /><path d="M10 44Q22 64 46 58Q60 52 62 34Q70 60 44 68Q18 68 10 44" fill="#f9b427" /></Task>
      <Task label="Outlook"><path d="M4 6H54L66 18V68H4Z" fill="#f0a81c" /><path d="M10 12H52L60 22V60H10Z" fill="#fbe08a" /><circle cx="28" cy="34" r="13" fill="none" stroke="#d97b08" strokeWidth="8" /><path d="M38 40H68V62H38Z" fill="#fff4d6" stroke="#d97b08" strokeWidth="2" /><path d="M38 40L53 53L68 40M46 30A8 8 0 0 1 58 22" stroke="#d97b08" strokeWidth="4" fill="none" /></Task>
      <Task label="Chrome"><circle cx="37" cy="37" r="31" fill="#fbc52d" /><path d="M37 37L10 22A31 31 0 0 1 64 22Z" fill="#e3392b" /><path d="M10 21A31 31 0 0 0 34 68L48 46L26 44Z" fill="#2f9e4b" /><path d="M24 22H65" stroke="#e3392b" strokeWidth="10" /><circle cx="37" cy="37" r="15" fill="#fff" /><circle cx="37" cy="37" r="11.5" fill="#3c7de6" /></Task>
      <Task label="Sticky notes" open><path d="M4 20L40 8L52 46L16 56Z" fill="#9bc984" /><path d="M20 14L48 12L50 46L24 48Z" fill="#8ebfe6" /><path d="M28 32L62 20L74 54L38 66Z" fill="#f8e576" stroke="#d2b93a" strokeWidth="1.5" /></Task>
      <Task label="Lync" open><path d="M4 8L46 3V70L4 62Z" fill="#d7edf8" stroke="#5aa6cf" strokeWidth="3" /><path d="M46 10H62V58H46Z" fill="#a9d5ec" stroke="#5aa6cf" strokeWidth="2" /><path d="M17 16V48H36" stroke="#1d78b4" strokeWidth="9" fill="none" /><path d="M32 38Q36 26 46 32Q58 30 58 42Q56 50 46 50H34Z" fill="#5db3df" stroke="#fff" strokeWidth="2" /><circle cx="60" cy="61" r="10" fill="#e04434" /><path d="M56 57L64 65M64 57L56 65" stroke="#fff" strokeWidth="3" /></Task>
      <Task label="Brackets" open><rect x="3" y="4" width="66" height="66" rx="7" fill="#2b8fd6" /><rect x="13" y="14" width="46" height="46" fill="#2c3238" /><path d="M31 22H22V52H31M41 22H50V52H41" stroke="#fff" strokeWidth="7" fill="none" /></Task>
      <Task label="Viewer" open><circle cx="36" cy="36" r="31" fill="#343435" /><path d="M36 24V58M36 34Q22 30 19 16M36 34Q50 30 53 16M31 58L36 34L41 58" stroke="#c06a2a" strokeWidth="5" fill="none" /><circle cx="36" cy="19" r="5" fill="#c06a2a" /></Task>
      <button aria-label="Rhinoceros" className="flex h-[27px] w-[44px] shrink-0 items-center justify-center rounded-sm border border-white bg-gradient-to-r from-[#f6e6e6] to-[#d98484]">
        <svg viewBox="0 0 72 72" className="h-6 w-[26px]"><rect width="72" height="72" fill="#1b1b1b" /><path d="M4 12L14 24L22 20L32 34L42 36L52 22L54 36L70 28L58 48L40 62L28 66L32 54L20 48L12 36Z" fill="#f4f4f4" /><path d="M32 40L42 46" stroke="#222" strokeWidth="3" /></svg>
      </button>
      <div className="ml-auto flex items-center gap-[7px] font-['Noto_Sans',sans-serif] text-[8px] leading-none text-white">
        <span className="pr-[5px]">EN</span>
        <svg viewBox="0 0 6 4" className="h-[3px] w-[5px]"><path d="M0 4h6L3 0z" fill="#fff" /></svg>
        <svg viewBox="0 0 30 30" className="h-2.5 w-2.5"><path d="M4 1V29" stroke="#fff" strokeWidth="4" /><path d="M6 3Q12 0 17 5T29 6V18Q21 21 16 16T6 17Z" fill="#fff" /></svg>
        <svg viewBox="0 0 30 30" className="h-2.5 w-2.5"><path d="M3 6H19V28H3ZM8 2H14V6H8Z" fill="#fff" /><path d="M18 2V9M26 2V9M15 9H29V15Q28 20 22 20Q16 20 15 15ZM22 20V29" fill="#dfe5ea" stroke="#2b3640" strokeWidth="2" /></svg>
        <svg viewBox="0 0 30 30" className="h-2.5 w-2.5"><path d="M1 24h4v5H1zM7 19h4v10H7zM13 13h4v16h-4zM19 7h4v22h-4zM25 1h4v28h-4z" fill="#fff" /></svg>
        <svg viewBox="0 0 30 30" className="h-2.5 w-2.5"><path d="M1 10H7L15 3V27L7 20H1Z" fill="#fff" /><path d="M19 9Q23 15 19 21M23 5Q30 15 23 25" stroke="#fff" strokeWidth="2" fill="none" /></svg>
        <div className="ml-1 flex w-[44px] flex-col items-center gap-1 whitespace-nowrap"><span>10:19 p.m.</span><span>23/03/2017</span></div>
        <button aria-label="Show desktop" className="h-[27px] w-2 border border-[#8fa3b5]/60 bg-[#3d5468]/60" />
      </div>
    </footer>
  );
}

export default function App() {
  return (
    <div className="flex h-screen min-h-[520px] flex-col overflow-hidden bg-[#dfe2ea] font-['Liberation_Sans',Arial,sans-serif] text-[9px] leading-none text-[#151515]">
      <header className="flex h-[15px] shrink-0 items-center bg-[linear-gradient(90deg,#b9cbdd_0%,#c2d2e2_18%,#88a9c8_22%,#9db9d4_33%,#7ea3c8_42%,#93bce0_50%,#4f7aa6_54%,#6b93bc_60%,#87a8cb_66%,#6289b3_72%,#8db5dc_84%,#9bbcdc_100%)] pl-px">
        <svg viewBox="0 0 36 36" className="h-3 w-3"><rect width="36" height="36" fill="#141414" /><path d="M2 7L8 13L12 10L16 17L22 18L27 10L28 18L35 14L29 24L20 31L14 33L16 27L9 23Z" fill="#f4f4f4" /></svg>
        <h1 className="pl-0.5 font-['Noto_Sans',sans-serif] text-[8px] text-[#0b0f14]">Wendy210217 - Rhinoceros 5.0 Educational</h1>
        <div className="ml-auto mr-0.5 flex h-[13px] self-start overflow-hidden rounded-b-sm border border-t-0 border-[#47586a]">
          <button aria-label="Minimize" className="flex w-5 items-center justify-center border-r border-[#5a6d80] bg-gradient-to-b from-[#c3d3e2] to-[#93acc4]"><span className="h-[3px] w-2 rounded-[1px] border border-[#444] bg-white" /></button>
          <button aria-label="Restore" className="flex w-[19px] items-center justify-center border-r border-[#5a6d80] bg-gradient-to-b from-[#c3d3e2] to-[#93acc4]"><svg viewBox="0 0 24 24" className="h-2 w-2"><path d="M8 2H22V16H8ZM2 8H16V22H2Z" fill="#fff" stroke="#444" strokeWidth="3" /><path d="M7 12H12V17H7Z" fill="#556" /></svg></button>
          <button aria-label="Close" className="flex w-[33px] items-center justify-center bg-gradient-to-b from-[#dd9a8b] via-[#c4402a] to-[#cc5a40]"><svg viewBox="0 0 24 24" className="h-2 w-2"><path d="M3 3L21 21M21 3L3 21" stroke="#433" strokeWidth="8" /><path d="M4 4L20 20M20 4L4 20" stroke="#fff" strokeWidth="5" /></svg></button>
        </div>
      </header>

      <nav className="flex h-[14px] shrink-0 items-center gap-[10px] border-t border-[#7d8fa3] bg-gradient-to-b from-[#f8f9fd] via-[#e2e7f4] to-[#d3daec] pl-[5px] font-['Noto_Sans',sans-serif] text-[8px]">
        {menus.map((m) => <button key={m}>{m}</button>)}
      </nav>

      <div className="shrink-0 border-y-2 border-[#d5d9e3] pl-[5px] pr-px">
        <div className="flex h-5 bg-white">
          <div role="log" className="flex-1 pt-px">1 extrusion added to selection.</div>
          <div className="flex w-2.5 flex-col items-center justify-around bg-[#f0f0f2]">
            <button aria-label="Scroll up" className="block"><Arrow up color="#222" /></button>
            <button aria-label="Scroll down" className="block"><Arrow color="#222" /></button>
          </div>
        </div>
        <div className="flex h-[14px] items-center border-t border-[#a3a7ae] bg-white">
          <label htmlFor="command" className="font-bold">Command:</label>
          <input id="command" className="ml-0.5 h-[11px] min-w-0 flex-1 border-l border-black bg-transparent outline-none" />
          <div className="flex h-2.5 w-2.5 flex-col items-center justify-between border border-[#b5b8c8] bg-[#eef0f8] py-px">
            <Arrow up color="#3c4fa5" /><Arrow color="#3c4fa5" />
          </div>
        </div>
      </div>

      <div className="flex h-[15px] shrink-0 items-end border-b border-[#b7bcc9] border-t border-t-[#cdd1dc] pl-[5px] pr-0.5 text-[8px]">
        {tabs.map((t, i) => (
          <button key={t} className="relative isolate h-[11px] whitespace-nowrap pl-1.5 pr-[5px]">
            <svg viewBox="0 0 60 33" preserveAspectRatio="none" className="absolute inset-0 -z-10 h-full w-full overflow-visible">
              <path d="M-2 33L5 2H58L62 8V33" fill={i === 0 ? "#fdfdfe" : "#d6d9e7"} stroke="#a4a9b8" strokeWidth="1" vectorEffect="non-scaling-stroke" />
            </svg>
            {t}
          </button>
        ))}
        <button aria-label="Toolbar options" className="ml-auto"><Gear /></button>
      </div>

      <div className="flex h-[25px] shrink-0 items-start border-l-4 border-[#dfe2ea] bg-gradient-to-b from-[#fbfbfc] to-[#dfe2e9] pl-0.5">
        <div className="flex w-[628px] justify-between">
          {std.map(([l, t, c]) => <Tool key={l} label={l} tri={t}>{c}</Tool>)}
        </div>
      </div>
      <div className="flex h-[27px] shrink-0 items-start border-l-4 border-t-2 border-[#d5d9e3] bg-gradient-to-b from-[#fbfbfc] to-[#dfe2e9] pl-0.5">
        <div className="flex w-[155px] justify-between">
          {extra.map(([l, c]) => <Tool key={l} label={l} tri>{c}</Tool>)}
        </div>
      </div>

      <div className="flex min-h-0 flex-1">
        <div className="flex w-[45px] shrink-0 flex-col bg-[#e0e3ea] pl-0.5 pr-[5px] pt-0.5">
          <div className="h-[3px] shrink-0 bg-[#cdd1da]" />
          <div className="mb-[26px] grid min-h-0 flex-1 grid-cols-2 items-center">
            {side.map(([l, t, c], i) => <Tool key={i} label={l} tri={t}>{c}</Tool>)}
          </div>
        </div>
        <main className="flex min-w-0 flex-1 flex-col">
          <div className="grid min-h-0 flex-1 grid-cols-2 grid-rows-2 gap-0.5 bg-[#e3e6ee] font-['Noto_Sans',sans-serif]">
            <Viewport name="Top" active><TopScene /></Viewport>
            <Viewport name="Perspective"><PerspectiveScene /></Viewport>
            <Viewport name="Front"><FrontScene /></Viewport>
            <Viewport name="Right"><RightScene /></Viewport>
          </div>
          <div className="flex h-[15px] shrink-0 items-start pt-px font-['Noto_Sans',sans-serif] text-[8px]">
            {["Perspective", "Top", "Front", "Right"].map((t) => (
              <button key={t} className={`h-3 rounded-bl-lg border-b border-r border-[#b2b7c6] pl-[7px] pr-[5px] ${t === "Top" ? "bg-white" : "bg-[#d6d9e7]"}`}>{t}</button>
            ))}
            <button aria-label="Add viewport" className="flex h-3 w-5 items-center justify-center rounded-bl-lg border-b border-r border-[#b2b7c6] bg-[#d6d9e7]">
              <svg viewBox="0 0 20 20" className="h-[7px] w-[7px]"><path d="M7 1H13V7H19V13H13V19H7V13H1V7H7Z" fill="#fff" stroke="#666" strokeWidth="2" /></svg>
            </button>
          </div>
        </main>
        <div className="w-[5px] shrink-0" />
        <Properties />
      </div>

      <div className="flex h-[14px] shrink-0 border-t-2 border-[#c9cdd8] bg-[#e4e7ee]">
        <Status w="w-[40px]">CPlane</Status>
        <Status w="w-[62px]">x 6.606</Status>
        <Status w="w-[62px]">y 14.780</Status>
        <Status w="w-[62px]">z 0.000</Status>
        <Status w="w-[62px]">Millimeters</Status>
        <button className="flex min-w-0 flex-1 items-center border-r border-[#c0c4cf] pl-px"><span className="mr-0.5 h-2.5 w-2.5 bg-black" />Default</button>
        <Status w="w-[54px]">Grid Snap</Status>
        <Status w="w-[33px]">Ortho</Status>
        <Status w="w-[38px]" on>Planar</Status>
        <Status w="w-[38px]">Osnap</Status>
        <Status w="w-[60px]" on>SmartTrack</Status>
        <Status w="w-[46px]">Gumball</Status>
        <Status w="w-[77px]">Record History</Status>
        <Status w="w-[31px]">Filter</Status>
        <div className="flex w-[110px] shrink-0 items-center border-r border-[#c0c4cf] pl-0.5">CPU use: 4.8 %</div>
        <div className="w-[5px] shrink-0" />
      </div>

      <Taskbar />
    </div>
  );
}
